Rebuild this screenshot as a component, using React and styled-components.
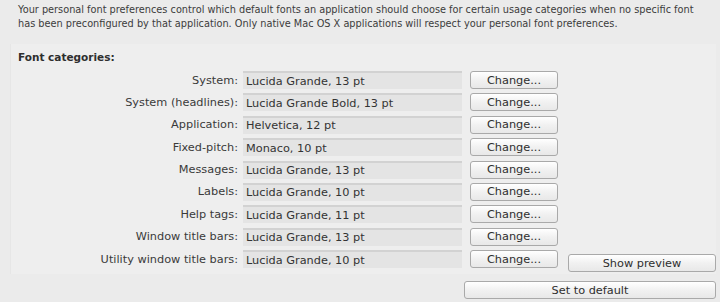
import React from "react";
import styled, { createGlobalStyle } from "styled-components";

const categories = [
  { label: "System", value: "Lucida Grande, 13 pt" },
  { label: "System (headlines)", value: "Lucida Grande Bold, 13 pt" },
  { label: "Application", value: "Helvetica, 12 pt" },
  { label: "Fixed-pitch", value: "Monaco, 10 pt" },
  { label: "Messages", value: "Lucida Grande, 13 pt" },
  { label: "Labels", value: "Lucida Grande, 10 pt" },
  { label: "Help tags", value: "Lucida Grande, 11 pt" },
  { label: "Window title bars", value: "Lucida Grande, 13 pt" },
  { label: "Utility window title bars", value: "Lucida Grande, 10 pt" },
];

export default function App() {
  return (
    <>
      <GlobalStyle />
      <Page>
        <Intro>
          Your personal font preferences control which default fonts an application should choose for certain usage
          categories when no specific font has been preconfigured by that application. Only native Mac OS X
          applications will respect your personal font preferences.
        </Intro>

        <Panel>
          <Heading>Font categories:</Heading>
          <Grid>
            {categories.map((c) => (
              <React.Fragment key={c.label}>
                <Label>{c.label}:</Label>
                <Field>{c.value}</Field>
                <Button type="button">Change...</Button>
              </React.Fragment>
            ))}
            <PreviewButton type="button">Show preview</PreviewButton>
          </Grid>
        </Panel>

        <Footer>
          <WideButton type="button">Set to default</WideButton>
        </Footer>
      </Page>
    </>
  );
}

const GlobalStyle = createGlobalStyle`
  html, body {
    margin: 0;
    padding: 0;
    background: #ebebeb;
  }
  body {
    font-family: "DejaVu Sans", "Open Sans", sans-serif;
    color: #333333;
  }
`;

const Page = styled.div`
  width: 720px;
  height: 302px;
  overflow: hidden;
  box-sizing: border-box;
  padding-top: 3px;
`;

const Intro = styled.p`
  width: 686px;
  margin: 0 0 0 18px;
  font-size: 9.75px;
  line-height: 14px;
  color: #3c3c3c;
`;

const Panel = styled.section`
  margin: 13px 4px 0 10px;
  padding: 6px 0 6px 7px;
  background: #eeeeee;
  border-left: 1px solid #e6e6e6;
`;

const Heading = styled.h2`
  margin: 0 0 7px 0;
  font-size: 10.5px;
  font-weight: bold;
  line-height: 14px;
  color: #2e2e2e;
`;

const Grid = styled.div`
  display: grid;
  grid-template-columns: 220px 224px 96px 158px;
  grid-auto-rows: 18px;
  row-gap: 4.4px;
  align-items: center;
`;

const Label = styled.span`
  grid-column: 1;
  text-align: right;
  font-size: 11.3px;
  color: #3a3a3a;
  white-space: nowrap;
`;

const Field = styled.div`
  grid-column: 2;
  height: 18px;
  margin-left: 5px;
  padding-left: 3px;
  box-sizing: border-box;
  display: flex;
  align-items: center;
  background: #e4e4e4;
  border-top: 2px solid #d2d2d2;
  font-size: 11.3px;
  color: #333333;
  white-space: nowrap;
  overflow: hidden;
`;

const buttonBase = `
  box-sizing: border-box;
  height: 18px;
  padding: 0;
  border: 1px solid #a9a9a9;
  border-radius: 3px;
  background: linear-gradient(#ffffff, #f1f1f1 50%, #e8e8e8);
  font-family: "DejaVu Sans", "Open Sans", sans-serif;
  font-size: 11.3px;
  color: #2e2e2e;
  cursor: pointer;
`;

const Button = styled.button`
  ${buttonBase}
  grid-column: 3;
  width: 88px;
  margin-left: 8px;
`;

const PreviewButton = styled.button`
  ${buttonBase}
  grid-column: 4;
  grid-row: 9;
  width: 148px;
  margin-left: 10px;
  margin-top: 8px;
`;

const Footer = styled.div`
  display: flex;
  justify-content: flex-end;
  padding-right: 4px;
  margin-top: 7px;
`;

const WideButton = styled.button`
  ${buttonBase}
  width: 252px;
`;
